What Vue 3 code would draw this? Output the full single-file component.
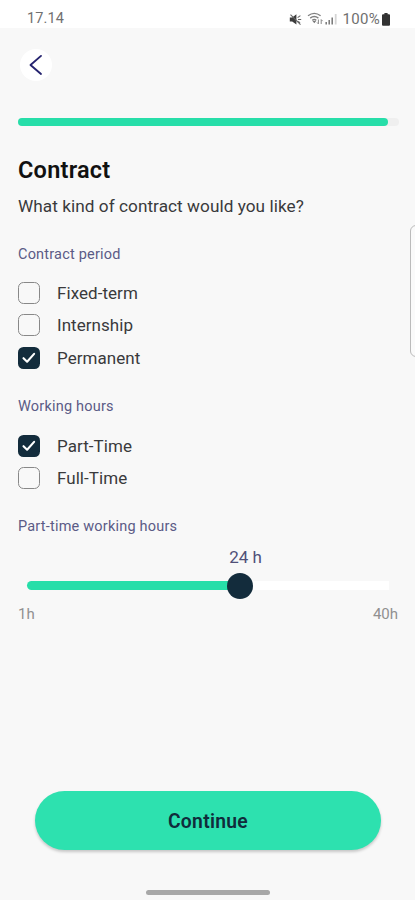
<script setup>
import { ref } from 'vue'

const periods = ref([
  { label: 'Fixed-term', checked: false },
  { label: 'Internship', checked: false },
  { label: 'Permanent', checked: true },
])
const workloads = ref([
  { label: 'Part-Time', checked: true },
  { label: 'Full-Time', checked: false },
])
const groups = [
  { title: 'Contract period', options: periods },
  { title: 'Working hours', options: workloads },
]
const hours = ref(24)
const position = (hours.value - 1) / 39 * 100
</script>

<template>
  <div class="screen">
    <header class="status">
      <span class="clock">17.14</span>
      <div class="indicators">
        <svg class="mute" width="13" height="13" viewBox="0 0 13 13">
          <path d="M.8 4.5h2.4L7.4 1.3v10.2L3.2 8.5H.8z" fill="#3c3c3c" />
          <path d="M1.5 1.6l10 10M8.6 4.6l2.8-2M9 6.5h3.2M8.6 8.1l2.5 1.5" fill="none" stroke="#666" stroke-width="1.1" />
        </svg>
        <svg class="wifi" width="17" height="14" viewBox="0 0 17 14">
          <path d="M1 3.7Q7.3-1 13.6 3.7M3.2 6.1Q7.3 2.8 11.4 6.1M5.3 8.4Q7.3 6.7 9.3 8.4" fill="none" stroke="#808080" stroke-width="1.4" />
          <path d="M5.5 9h3.6l-1.8 2.3z" fill="#777" />
          <path d="M11.4 7.5v4.4l-1.3-1.4M14.2 12V7.6l1.4 1.5" fill="none" stroke="#888" stroke-width="1" />
        </svg>
        <svg class="signal" width="13" height="12" viewBox="0 0 13 12">
          <path d="M1.2 9v2.5M4.2 7v4.5M7.2 4.5v7" stroke="#777" stroke-width="1.5" />
          <path d="M10.7 1v10.5" stroke="#d5d5d5" stroke-width="1.8" />
        </svg>
        <span class="percent">100%</span>
        <svg class="battery" width="8" height="13" viewBox="0 0 8 13">
          <path d="M2.4 0h3.2v1.3H7q1 0 1 1v9.4q0 1-1 1H1q-1 0-1-1V2.3q0-1 1-1h1.4z" fill="#333" />
        </svg>
      </div>
    </header>

    <main class="content">
      <button class="back" aria-label="Back">
        <svg width="32" height="32" viewBox="0 0 32 32">
          <path d="M21 6.9L10.5 16 21 25" fill="none" stroke="#25236f" stroke-width="1.9" stroke-linecap="round" stroke-linejoin="round" />
        </svg>
      </button>

      <div class="progress"><div class="progress-fill"></div></div>

      <h1 class="title">Contract</h1>
      <p class="question">What kind of contract would you like?</p>

      <section v-for="group in groups" :key="group.title" class="group">
        <h2 class="caption">{{ group.title }}</h2>
        <div class="options">
          <label v-for="option in group.options.value" :key="option.label" class="option" @click="option.checked = !option.checked">
            <span class="box" :class="{ checked: option.checked }">
              <svg v-if="option.checked" width="22" height="22" viewBox="0 0 22 22">
                <path d="M5.5 11.2l3.6 3.5 7-7.8" fill="none" stroke="#fff" stroke-width="2.1" stroke-linecap="round" stroke-linejoin="round" />
              </svg>
            </span>
            <span class="option-label">{{ option.label }}</span>
          </label>
        </div>
      </section>

      <section class="group">
        <h2 class="caption">Part-time working hours</h2>
        <div class="slider">
          <div class="track">
            <div class="track-fill" :style="{ width: position + '%' }"></div>
            <div class="thumb" :style="{ left: position + '%' }">
              <span class="value">{{ hours }} h</span>
            </div>
          </div>
        </div>
        <div class="limits"><span>1h</span><span>40h</span></div>
      </section>
    </main>

    <footer class="footer">
      <button class="continue">Continue</button>
      <div class="navigation"><div class="handle"></div></div>
    </footer>
    <div class="edge-panel"></div>
  </div>
</template>

<style>
body {
  background: #f8f8f8;
}
</style>

<style scoped>
.screen {
  position: relative;
  display: flex;
  flex-direction: column;
  width: 415px;
  height: 900px;
  overflow: hidden;
  background: #f8f8f8;
  color: #3a3a3c;
  font-family: Roboto, "Liberation Sans", sans-serif;
}
.status {
  display: flex;
  align-items: center;
  justify-content: space-between;
  box-sizing: border-box;
  height: 28px;
  padding: 10px 25px 0 27px;
  background: #fff;
  color: #707070;
  font-size: 14.5px;
  line-height: 18px;
}
.clock {
  letter-spacing: .15px;
}
.indicators {
  display: flex;
  align-items: center;
}
.wifi {
  margin-left: 5px;
}
.signal {
  margin-left: 1px;
}
.percent {
  margin-left: 5px;
  font-size: 15px;
  letter-spacing: .3px;
}
.battery {
  margin-left: 2px;
}
.content {
  flex: 1;
  padding: 21px 16px 0 18px;
}
.back {
  display: block;
  width: 32px;
  height: 32px;
  margin: 0 0 0 2px;
  padding: 0;
  border: 0;
  border-radius: 50%;
  background: #fff;
}
.back svg {
  display: block;
}
.progress {
  height: 8px;
  margin-top: 37px;
  border-radius: 4px;
  background: #efefef;
}
.progress-fill {
  width: 370px;
  height: 8px;
  border-radius: 4px;
  background: #27dea9;
}
.title {
  margin: 30px 0 0;
  color: #111;
  font-size: 23.5px;
  font-weight: 600;
  line-height: 28px;
  letter-spacing: .25px;
}
.question {
  margin: 10px 0 27px;
  font-size: 17.2px;
  line-height: 24px;
  letter-spacing: .05px;
}
.caption {
  margin: 0;
  color: #5b5b86;
  font-size: 14.5px;
  font-weight: 400;
  line-height: 20px;
  letter-spacing: .2px;
}
.options {
  padding: 12px 0 23.5px;
}
.option {
  display: flex;
  align-items: center;
  gap: 17px;
  height: 32.3px;
}
.box {
  box-sizing: border-box;
  width: 22px;
  height: 22px;
  border: 1px solid #888;
  border-radius: 5.5px;
}
.box.checked {
  border: 0;
  background: #132c3c;
}
.box svg {
  display: block;
}
.option-label {
  font-size: 17px;
  line-height: 24px;
  letter-spacing: .05px;
}
.slider {
  padding: 44px 10px 0 8.5px;
}
.track {
  position: relative;
  height: 9px;
  background: #fff;
  border-radius: 4.5px 0 0 4.5px;
}
.track-fill {
  height: 9px;
  border-radius: 4.5px 0 0 4.5px;
  background: #27dea9;
}
.thumb {
  position: absolute;
  top: 50%;
  width: 26px;
  height: 26px;
  border-radius: 50%;
  background: #132c3c;
  transform: translate(-50%, -50%);
}
.value {
  position: absolute;
  bottom: 32px;
  left: 2px;
  color: #505078;
  font-size: 17px;
  line-height: 20px;
  white-space: nowrap;
}
.limits {
  display: flex;
  justify-content: space-between;
  margin-top: 14px;
  color: #909090;
  font-size: 15px;
  line-height: 20px;
}
.limits span:last-child {
  margin-right: 1px;
}
.footer {
  padding: 0 34px 0 35px;
}
.continue {
  display: block;
  width: 346px;
  height: 59px;
  padding: 2px 0 0;
  border: 0;
  border-radius: 29.5px;
  background: #2de1af;
  box-shadow: 0 2px 3px rgba(0, 0, 0, .2);
  color: #102c3b;
  font-family: inherit;
  font-size: 19.3px;
  font-weight: 600;
  letter-spacing: .3px;
}
.navigation {
  box-sizing: border-box;
  height: 50px;
  padding-top: 40px;
}
.handle {
  width: 124px;
  height: 5px;
  margin-left: 111px;
  border-radius: 2.5px;
  background: #a8a8a8;
}
.edge-panel {
  position: absolute;
  top: 225px;
  left: 410px;
  box-sizing: border-box;
  width: 20px;
  height: 132px;
  border: 1px solid #bbb;
  border-radius: 6px;
  background: #fafafa;
}
</style>
